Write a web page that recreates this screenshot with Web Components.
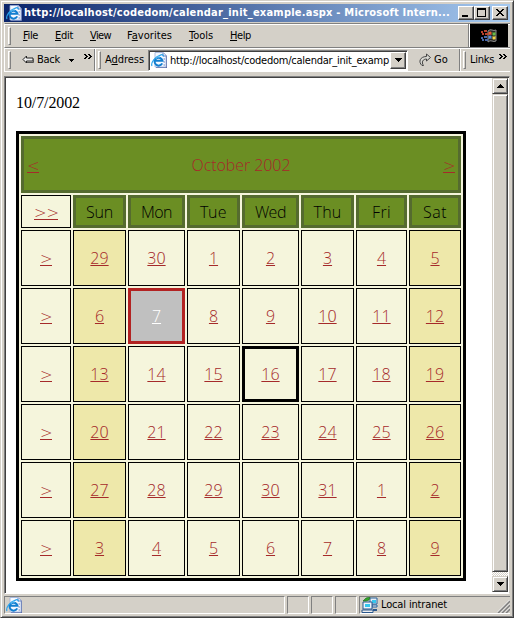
<!DOCTYPE html>
<html lang="en"><head><meta charset="utf-8"><title>Calendar</title>
<style>html,body{margin:0;height:618px;overflow:hidden;background:#d4d0c8}</style></head>
<body><browser-window></browser-window>
<script>
const define=(name,css,html,after)=>{
  customElements.define(name,class extends HTMLElement{
    constructor(){super();this.attachShadow({mode:'open'});}
    connectedCallback(){
      this.shadowRoot.innerHTML='<style>:host,*{box-sizing:border-box}'+css+'</style>'+(typeof html==='function'?html(this):html);
      if(after)after(this);
    }
  });
};

/* A line of text spaced so that it fills the width in its w attribute */
define('fit-text',':host{display:inline-block;white-space:nowrap;flex:none}span{display:inline-block}','<span><slot></slot></span>',el=>{
  const w=+el.getAttribute('w'),s=el.shadowRoot.querySelector('span');
  const n=el.textContent.length,r=s.getBoundingClientRect().width;
  s.style.letterSpacing=((w-r)/n)+'px';
  el.style.width=w+'px';
});

define('page-icon',':host{display:block;width:17px;height:17px;flex:none}svg{display:block}',`
<svg width="17" height="17" viewBox="0 0 17 17">
<path d="M5 1h8l3 3v12H5z" fill="#5d6da8"/><path d="M4 .5h8.5L15 3.5V15H4z" fill="#f4f8ff" stroke="#9baed8" stroke-width=".8"/>
<path d="M12 1v3h3M12.5 7h1.5M12.5 10h1.5M12.5 13h1.5" fill="none" stroke="#6a82c0"/>
<path d="M11.2 11.4A4 4 0 1 1 11.500 8.8H4.6" fill="none" stroke="#137fd0" stroke-width="2"/>
<path d="M1 14C-.5 11 4 4.5 10 2.8c2-.4 2.6.5 2 1.8" fill="none" stroke="#2aa3ec" stroke-width="1.2"/>
<path d="M5 6.5A3.5 3.5 0 0 1 9 5" fill="none" stroke="#74cafa"/></svg>`);

define('title-button',`:host{display:flex;width:16px;height:14px;flex:none;background:#d4d0c8;border:1px solid;border-color:#fff #404040 #404040 #fff;box-shadow:inset -1px -1px #808080}svg{display:block}`,
el=>'<svg width="14" height="12" shape-rendering="crispEdges">'+({
 min:'<path d="M3 8h6v2H3z"/>',
 max:'<path d="M2 1h9v9H2zM3 3v6h7V3z" fill-rule="evenodd"/>',
 close:'<path d="M3 2h2v1h1v1h2v-1h1v-1h2v1h-1v1h-1v1h-1v1h1v1h1v1h1v1h-2v-1h-1v-1h-2v1h-1v1h-2v-1h1v-1h1v-1h1v-1h-1v-1h-1v-1h-1z"/>'}[el.getAttribute('kind')])+'</svg>');

define('title-bar',`:host{display:flex;height:18px;align-items:center;padding:0 2px;background:linear-gradient(90deg,#0a246a,#a6caf0);color:#fff;font:bold 11px/18px "DejaVu Sans Condensed","DejaVu Sans",sans-serif}
.t{flex:1;padding-left:1px;height:18px}.gap{width:2px}`,
`<page-icon></page-icon><div class="t"><fit-text w="426">http://localhost/codedom/calendar_init_example.aspx - Microsoft Intern...</fit-text></div>
<title-button kind="min"></title-button><title-button kind="max"></title-button><div class="gap"></div><title-button kind="close"></title-button>`);

define('tool-grip',`:host{display:block;width:3px;height:18px;flex:none;background:#d4d0c8;border:1px solid;border-color:#fff #808080 #808080 #fff}`,'');

define('menu-bar',`:host{display:flex;height:25px;align-items:center;border-top:1px solid #808080;border-left:1px solid #fff;box-shadow:inset 0 1px #fff;padding-left:3px;padding-right:2px;border-bottom:1px solid #808080}
nav{display:flex;flex:1;gap:17px;padding-left:12px;height:22px;align-items:center}u{text-decoration-thickness:1px;text-underline-offset:1px}
.logo{width:40px;height:23px;border-left:1px solid #808080;background:#000;box-shadow:inset 1px 0 #fff;display:flex;align-items:center;justify-content:center}`,
`<tool-grip></tool-grip><nav><fit-text w="15"><u>F</u>ile</fit-text><fit-text w="18"><u>E</u>dit</fit-text><fit-text w="21" style="margin-right:-1px"><u>V</u>iew</fit-text><fit-text w="45">F<u>a</u>vorites</fit-text><fit-text w="24"><u>T</u>ools</fit-text><fit-text w="21"><u>H</u>elp</fit-text></nav>
<div class="logo"><svg width="18" height="16" viewBox="0 0 18 16"><path d="M8 3Q10 1 12 2q2 1 4 0v11q-2 1-4 0t-4 1z" fill="#292929" stroke="#8c8c8c"/><path d="M8.500 4q2-1 3 0v3q-1-1-3 0z" fill="#ed5b30"/><path d="M12.500 4q1 1 3 0v3q-2 1-3 0z" fill="#69bd45"/><path d="M8.500 8q2-1 3 0v3q-1-1-3 0z" fill="#568bdc"/><path d="M12.500 8q1 1 3 0v3q-2 1-3 0z" fill="#f3d548"/><path d="M1 4h2M4 3h3M2 6h2M5 6h3" stroke="#b6412d" stroke-width="2"/><path d="M1 10h2M4 9h3M2 12h2M5 12h3" stroke="#4766a8" stroke-width="2"/></svg></div>`);

define('more-chevron',':host{display:block;width:8px;height:5px;flex:none}svg{display:block}','<svg width="8" height="5" shape-rendering="crispEdges"><path d="M0 0h2v1h1v1h1v1h-1v1h-1v1h-2v-1h1v-1h1v-1h-1v-1h-1zM4 0h2v1h1v1h1v1h-1v1h-1v1h-2v-1h1v-1h1v-1h-1v-1h-1z"/></svg>');

define('address-bar',`:host{display:flex;height:24px;border-left:1px solid #fff;border-top:1px solid #fff;border-bottom:1px solid #fff;align-items:center;padding-left:3px}
svg{display:block;flex:none}more-chevron{margin-bottom:7px}
.sep{width:2px;height:22px;border-left:1px solid #808080;background:#fff;flex:none}u{text-underline-offset:1px}
.field{display:flex;align-items:center;width:260px;height:21px;background:#fff;border:1px solid;border-color:#808080 #fff #fff #808080;box-shadow:inset 1px 1px #404040;padding:1px 1px 1px 2px;flex:none}
.url{flex:1;overflow:hidden;padding-left:2px;white-space:nowrap;line-height:16px;padding-top:1px}
.dd{width:16px;height:17px;background:#d4d0c8;border:1px solid;border-color:#fff #404040 #404040 #fff;box-shadow:inset -1px -1px #808080;display:flex;align-items:center;justify-content:center;flex:none}`,
`<tool-grip></tool-grip>
<svg width="12" height="10" viewBox="0 0 12 10" style="margin-left:11px"><path d="M1 4.500L4.500 1v2H11v3H4.500v2z" fill="#eee" stroke="#222"/><path d="M5 7.500h6.500V4" fill="none" stroke="#555"/></svg>
<fit-text w="23" style="margin-left:3px">Back</fit-text>
<svg width="5" height="3" style="margin:1px 0 0 9px" shape-rendering="crispEdges"><path d="M0 0h5v1h-1v1h-1v1h-1v-1h-1v-1h-1z"/></svg>
<more-chevron style="margin-left:10px"></more-chevron><div class="sep" style="margin-left:2px"></div><tool-grip style="margin-left:2px"></tool-grip>
<fit-text w="39" style="margin-left:4px">A<u>d</u>dress</fit-text>
<div class="field" style="margin-left:4px"><page-icon></page-icon><div class="url"><fit-text w="219">http://localhost/codedom/calendar_init_examp</fit-text></div>
<div class="dd"><svg width="7" height="4" shape-rendering="crispEdges"><path d="M0 0h7v1h-1v1h-1v1h-1v1h-1v-1h-1v-1h-1v-1h-1z"/></svg></div></div>
<svg width="15" height="15" viewBox="0 0 15 15" style="margin-left:10px"><path d="M4 12.500C0 9 2 3.500 8.500 3.500V1l4 3.500-4 3.500V6C5 6 3 9 5.500 12.500z" fill="#d8d8d2" stroke="#444"/></svg>
<fit-text w="14" style="margin-left:1px">Go</fit-text><div class="sep" style="margin-left:11px"></div><tool-grip style="margin-left:2px"></tool-grip>
<fit-text w="24" style="margin-left:4px">Links</fit-text><more-chevron style="margin-left:5px"></more-chevron>`);

define('scroll-bar',`:host{display:flex;flex-direction:column;width:16px;height:100%;flex:none;background:repeating-conic-gradient(#fff 0 25%,#d4d0c8 0 50%) 0 0/2px 2px}
div{background:#d4d0c8;border:1px solid;border-color:#d4d0c8 #404040 #404040 #d4d0c8;box-shadow:inset 1px 1px #fff,inset -1px -1px #808080;display:flex;align-items:center;justify-content:center;flex:none}
.b{height:16px}.thumb{height:478px}.sp{flex:1;background:none;border:0;box-shadow:none}`,
`<div class="b"><svg width="7" height="4" shape-rendering="crispEdges"><path d="M3 0h1v1h1v1h1v1h1v1h-7v-1h1v-1h1v-1h1z"/></svg></div><div class="thumb"></div><div class="sp"></div><div class="b"><svg width="7" height="4" shape-rendering="crispEdges"><path d="M0 0h7v1h-1v1h-1v1h-1v1h-1v-1h-1v-1h-1v-1h-1z"/></svg></div>`);

define('day-cell',`:host{display:flex;align-items:center;justify-content:center;border:1px solid #000;background:#f5f5dc;color:#a52a2a}
:host([weekend]){background:#eee8aa}:host([today]){border:3px solid #000}
:host([selected]){border:3px solid #b22222;background:silver;color:#fff}
:host([head]){border:3px solid #556b2f;background:#6b8e23;color:#000}
.l{text-decoration:underline;text-decoration-thickness:1px;text-underline-offset:1px;line-height:20px}`,
el=>`<span class="${el.hasAttribute('head')?'':'l'}"><slot></slot></span>`);

define('arrow-link',`:host{display:inline-block;border-bottom:1px solid;font:200 15px/14px "DejaVu Sans Light","DejaVu Sans ExtraLight","DejaVu Sans",sans-serif;height:14px;text-align:center;margin-top:2px}`,'<slot></slot>',el=>{el.style.width=12*el.textContent.length+'px'});

define('month-calendar',`:host{display:grid;width:450px;height:450px;border:3px solid #000;padding:2px;gap:2px;background:#f5f5dc;grid-template-columns:50px 53px 57px 53px 57px 53px 51px 52px;grid-template-rows:57px 33px repeat(6,56px);font:300 16px "Open Sans Light","Open Sans",sans-serif}
.head{grid-column:1/-1;border:3px solid #556b2f;background:#6b8e23;color:#a52a2a;display:flex;align-items:center;justify-content:space-between;padding:0 3px}
.pick{display:flex;align-items:center;justify-content:center;border:1px solid #000;color:#a52a2a}`,()=>{
  const names=[['Sun',27],['Mon',31],['Tue',27],['Wed',31],['Thu',28],['Fri',19],['Sat',24]];
  let h='<div class="head"><arrow-link>&lt;</arrow-link><fit-text w="99">October 2002</fit-text><arrow-link>&gt;</arrow-link></div><div class="pick"><arrow-link>&gt;&gt;</arrow-link></div>';
  for(const [n,w] of names)h+=`<day-cell head><fit-text w="${w}">${n}</fit-text></day-cell>`;
  for(let r=0;r<6;r++){
    h+='<div class="pick"><arrow-link>&gt;</arrow-link></div>';
    for(let c=0;c<7;c++){
      const date=new Date(2002,8,29+r*7+c),d=date.getDate(),oct=date.getMonth()===9;
      h+=`<day-cell ${c%6===0?'weekend':''} ${oct&&d===7?'selected':''} ${oct&&d===16?'today':''}>${d}</day-cell>`;
    }
  }
  return h;});

define('status-bar',`:host{display:flex;gap:2px;height:18px}
div{border:1px solid;border-color:#808080 #fff #fff #808080;width:22px;display:flex;align-items:center;flex:none}
.a{width:281px;padding-left:1px}.z{width:150px;padding-left:1px;flex:1;justify-content:space-between;border-right:0}svg{display:block;flex:none}`,
`<div class="a"><page-icon></page-icon></div><div></div><div></div><div></div>
<div class="z"><svg width="17" height="16" viewBox="0 0 17 16"><path d="M9 1h7v6H9zM11 8h5v2h-5z" fill="#e8eef4" stroke="#29629c"/><path d="M11 3h4v3h-4z" fill="#35c6ee"/><path d="M2 5h9v7H2z" fill="#eef4fa" stroke="#29568c"/><path d="M4 7h5v3H4z" fill="#35c6ee"/><path d="M1 13h11v2.500H1z" fill="#eee" stroke="#29568c"/><path d="M12 13h4" stroke="#29568c" stroke-width="2"/><path d="M2 4l3-3 4-1-1 3-3 1z" fill="#33a52a" stroke="#12661a" stroke-width=".6"/></svg>
<fit-text w="66" style="margin:0 auto 0 3px">Local intranet</fit-text>
<svg width="13" height="13" viewBox="0 0 13 13" style="align-self:flex-end"><path d="M1 13L13 1M5 13l8-8M9 13l4-4" stroke="#808080" stroke-width="1.8"/><path d="M0 12.500L12.500 0M4 12.500L13 3.500M8 12.500l5-5" stroke="#fff" stroke-width=".8"/></svg></div>`);

define('browser-window',`:host{display:flex;flex-direction:column;width:514px;height:618px;background:#d4d0c8;border:1px solid;border-color:#d4d0c8 #404040 #404040 #d4d0c8;box-shadow:inset 1px 1px #fff,inset -1px -1px #808080;padding:3px;font:11px/14px "DejaVu Sans Condensed","DejaVu Sans",sans-serif;color:#000}
title-bar{margin-bottom:1px}
.view{display:flex;margin-top:4px;height:518px;background:#fff;border:1px solid;border-color:#808080 #d4d0c8 #fff #808080;box-shadow:inset 1px 1px #404040;padding:1px 1px 1px 1px}
.page{flex:1;padding:15px 0 0 10px}p{margin:0 0 19px;font:16px/19px "Liberation Serif",serif}
status-bar{margin-top:2px}`,
`<title-bar></title-bar><menu-bar></menu-bar><address-bar></address-bar>
<div class="view"><div class="page"><p><fit-text w="64">10/7/2002</fit-text></p><month-calendar></month-calendar></div><scroll-bar></scroll-bar></div><status-bar></status-bar>`);
</script></body></html>
